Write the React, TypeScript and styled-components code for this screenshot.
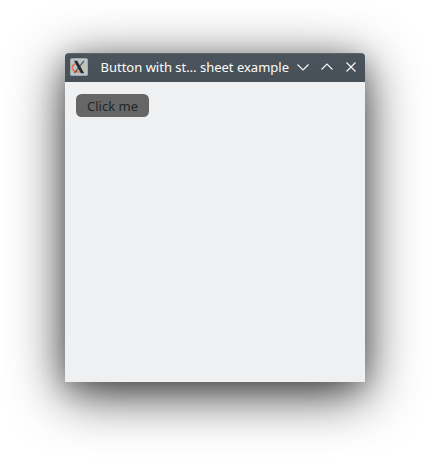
import React from "react";
import styled, { createGlobalStyle } from "styled-components";

const GlobalStyle = createGlobalStyle`
  * { box-sizing: border-box; }
  html, body { margin: 0; background: #fff; overflow: hidden; }
`;

const Desktop = styled.main`
  width: 430px;
  height: 459px;
  padding: 53px 65px 77px;
  font-family: "Noto Sans", sans-serif;
  font-size: 13px;
`;

const Window = styled.section`
  display: flex;
  flex-direction: column;
  height: 329px;
  border-radius: 4px 4px 0 0;
  background: #eff0f1;
  box-shadow: 0 12px 53px rgba(0, 0, 0, 0.78), 0 6px 24px rgba(0, 0, 0, 0.2);
`;

const TitleBar = styled.header`
  display: flex;
  align-items: center;
  flex: 0 0 29px;
  padding: 0 5px 1px;
  border-radius: 4px 4px 0 0;
  background: linear-gradient(#5c656c 0 1px, #4b545c 1px, #475057);
  color: #fcfcfc;
`;

const Title = styled.h1`
  flex: 1;
  margin: 0 0 0 12.5px;
  font-size: 13px;
  font-weight: 400;
  line-height: 18px;
  white-space: nowrap;
`;

const Controls = styled.div`
  display: flex;
  gap: 6px;
`;

const WindowButton = styled.button`
  display: flex;
  width: 18px;
  height: 18px;
  padding: 0;
  border: 0;
  background: none;
  color: #fcfcfc;
`;

const Content = styled.div`
  display: flex;
  align-items: flex-start;
  flex: 1;
  padding: 12px 11px;
`;

const PushButton = styled.button`
  width: 73px;
  height: 23px;
  padding: 1px 0 0;
  border: 0;
  border-radius: 5.5px;
  background: #666;
  color: #232629;
  font-family: inherit;
  font-size: 13px;
  line-height: 22px;
`;

const XLogo = () => (
  <svg width="18" height="18" viewBox="0 0 18 18">
    <rect x=".2" y=".2" width="17.6" height="17.6" rx="1.5" fill="#bcc4c7" />
    <path d="M6.8 5.6C3.6 6.2 2 8.2 2.4 10.4c.5 2.4 3 3.8 7 3.6" fill="none" stroke="#ee6f43" strokeWidth="1.5" />
    <path d="M9.4 14c3.8-.1 6.4-2 6.4-4.4 0-1.7-1-2.9-2.6-3.6" fill="none" stroke="#e5b98a" strokeWidth="1.2" />
    <path d="M14 2.8 4.4 15.2" stroke="#4b5052" strokeWidth="1.1" />
    <path d="M4 2.8h3.2l7 12.4h-3.4z" fill="#292d2f" />
  </svg>
);

const Glyph = ({ d }: { d: string }) => (
  <svg width="18" height="18" viewBox="0 0 18 18" fill="none" stroke="currentColor" strokeWidth="1.1">
    <path d={d} />
  </svg>
);

const controls = [
  { label: "Minimize", d: "M3.5 6.5 9 12l5.5-5.5" },
  { label: "Maximize", d: "M3.5 11.5 9 6l5.5 5.5" },
  { label: "Close", d: "m4.5 4.5 9 9m0-9-9 9" },
];

export default function App() {
  return (
    <>
      <GlobalStyle />
      <Desktop>
        <Window>
          <TitleBar>
            <XLogo />
            <Title>Button with st… sheet example</Title>
            <Controls>
              {controls.map((c) => (
                <WindowButton key={c.label} aria-label={c.label}>
                  <Glyph d={c.d} />
                </WindowButton>
              ))}
            </Controls>
          </TitleBar>
          <Content>
            <PushButton>Click me</PushButton>
          </Content>
        </Window>
      </Desktop>
    </>
  );
}
